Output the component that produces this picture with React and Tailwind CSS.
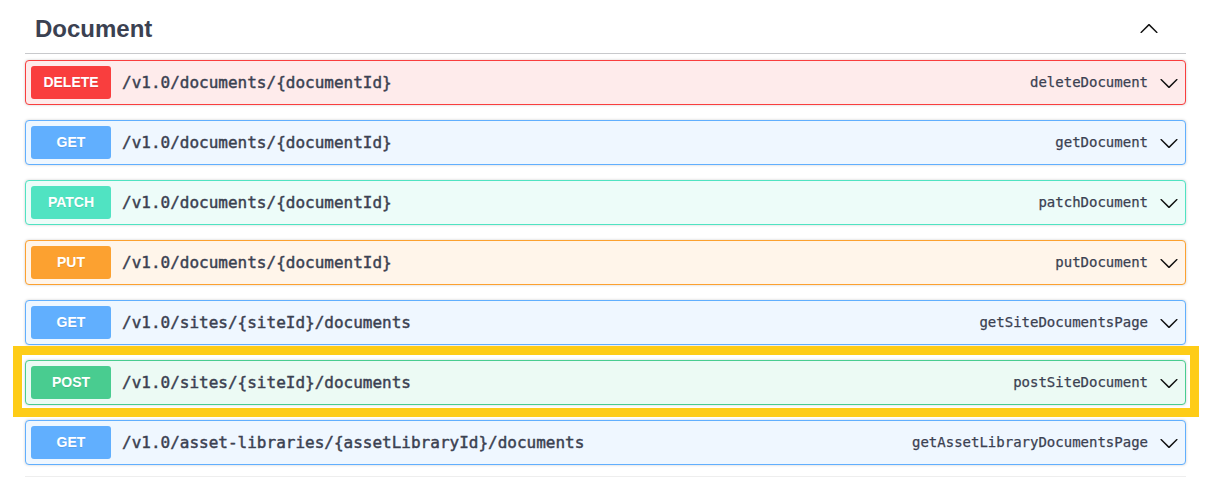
import React from "react";

const ops = [
  { method: "DELETE", path: "/v1.0/documents/{documentId}", id: "deleteDocument", badge: "bg-[#f93e3e]", row: "bg-[#feebeb] border-[#f93e3e]" },
  { method: "GET", path: "/v1.0/documents/{documentId}", id: "getDocument", badge: "bg-[#61affe]", row: "bg-[#eff7ff] border-[#61affe]" },
  { method: "PATCH", path: "/v1.0/documents/{documentId}", id: "patchDocument", badge: "bg-[#50e3c2]", row: "bg-[#edfcf9] border-[#50e3c2]" },
  { method: "PUT", path: "/v1.0/documents/{documentId}", id: "putDocument", badge: "bg-[#fca130]", row: "bg-[#fff5ea] border-[#fca130]" },
  { method: "GET", path: "/v1.0/sites/{siteId}/documents", id: "getSiteDocumentsPage", badge: "bg-[#61affe]", row: "bg-[#eff7ff] border-[#61affe]" },
  { method: "POST", path: "/v1.0/sites/{siteId}/documents", id: "postSiteDocument", badge: "bg-[#49cc90]", row: "bg-[#ecfaf4] border-[#49cc90]", highlight: true },
  { method: "GET", path: "/v1.0/asset-libraries/{assetLibraryId}/documents", id: "getAssetLibraryDocumentsPage", badge: "bg-[#61affe]", row: "bg-[#eff7ff] border-[#61affe]" },
];

const Arrow = ({ up }) => (
  <svg width="20" height="20" viewBox="0 0 20 20" className={up ? "rotate-180" : ""} fill="#111">
    <path d="M17.418 6.109c.272-.268.709-.268.979 0s.271.701 0 .969l-7.908 7.83c-.27.268-.707.268-.979 0l-7.908-7.83c-.27-.268-.27-.701 0-.969.271-.268.709-.268.979 0L10 13.25l7.418-7.141z" />
  </svg>
);

function OpRow({ op }) {
  return (
    <div className="relative">
      {op.highlight && (
        <div className="absolute -top-[14px] -left-[12px] -right-[13px] -bottom-[12px] border-[9px] border-[#fecc17] pointer-events-none" />
      )}
      <div className={`flex items-center h-[45px] px-[5px] border rounded-[4px] shadow-[0_0_3px_rgba(0,0,0,0.19)] ${op.row}`}>
        <span className={`w-[80px] h-[33px] flex items-center justify-center rounded-[3px] text-white text-[14px] font-bold [text-shadow:0_1px_0_rgba(0,0,0,0.1)] font-['Liberation_Sans',Arial,sans-serif] ${op.badge}`}>
          {op.method}
        </span>
        <span className="ml-[11px] flex-1 text-[16px] text-[#3b4151] [-webkit-text-stroke:0.45px_#3b4151] font-['DejaVu_Sans_Mono',monospace]">
          {op.path}
        </span>
        <span className="text-[14px] text-[#3b4151] [-webkit-text-stroke:0.25px_#3b4151] font-['DejaVu_Sans_Mono',monospace]">{op.id}</span>
        <span className="ml-[11px] mr-[1px]">
          <Arrow />
        </span>
      </div>
    </div>
  );
}

export default function App() {
  return (
    <div className="w-[1211px] h-[479px] bg-white overflow-hidden font-['Liberation_Sans',Arial,sans-serif]">
      <div className="mx-[25px]">
        <div className="flex items-center justify-between h-[54px] pl-[10px] pr-[27px] pt-[4px] border-b border-[#c8c9cc]">
          <h3 className="text-[24px] font-bold text-[#3b4151]">Document</h3>
          <Arrow up />
        </div>
        <div className="mt-[6px] flex flex-col gap-[15px]">
          {ops.map((op, i) => (
            <OpRow key={i} op={op} />
          ))}
        </div>
        <div className="mt-[11px] border-t border-[#eeeeee]" />
      </div>
    </div>
  );
}
